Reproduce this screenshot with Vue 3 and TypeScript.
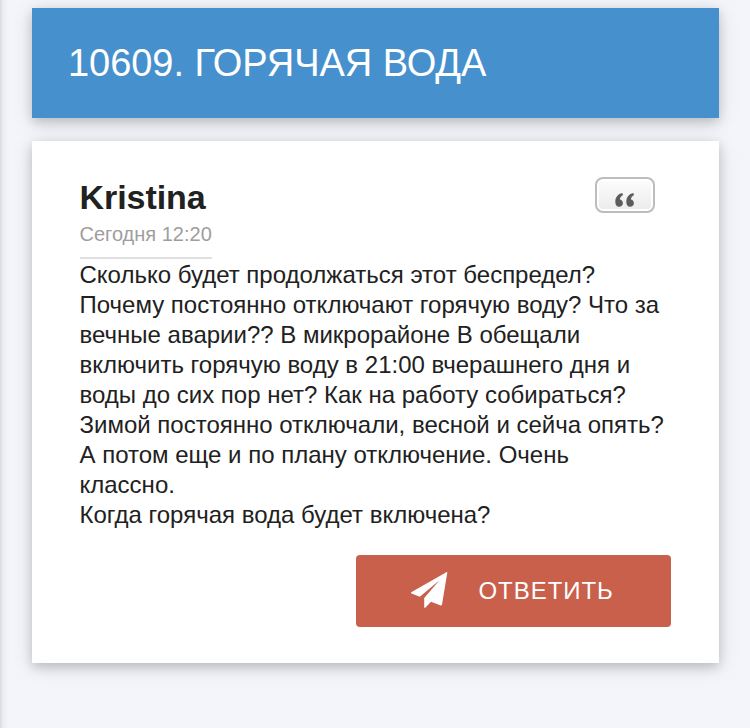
<script setup lang="ts">
const title: string = '10609. ГОРЯЧАЯ ВОДА'
const lines: string[] = [
  'Сколько будет продолжаться этот беспредел?',
  'Почему постоянно отключают горячую воду? Что за',
  'вечные аварии?? В микрорайоне В обещали',
  'включить горячую воду в 21:00 вчерашнего дня и',
  'воды до сих пор нет? Как на работу собираться?',
  'Зимой постоянно отключали, весной и сейча опять?',
  'А потом еще и по плану отключение. Очень',
  'классно.',
  'Когда горячая вода будет включена?',
]
</script>

<template>
  <main class="page">
    <div class="topic">
      <header class="title-card"><h1>{{ title }}</h1></header>
      <article class="post">
        <div class="post-head">
          <div class="meta">
            <h2>Kristina</h2>
            <time>Сегодня 12:20</time>
          </div>
          <button class="quote" aria-label="Цитировать">
            <svg width="22" height="16" viewBox="0 0 22 16">
              <path d="M8.300 1C4 2 1.300 5 1.300 9.800C1.300 13 2.800 14.800 5 14.800C7.200 14.800 8.900 13.300 8.900 11.300C8.900 9.300 7.600 7.700 5.900 7.600C6 5.500 7 4 9 2.900Z" />
              <path d="M19.300 1C15 2 12.300 5 12.300 9.800C12.300 13 13.800 14.800 16 14.800C18.200 14.800 19.900 13.300 19.900 11.300C19.900 9.300 18.600 7.700 16.900 7.600C17 5.500 18 4 20 2.900Z" />
            </svg>
          </button>
        </div>
        <p class="body"><span v-for="line in lines" :key="line">{{ line }}</span></p>
        <div class="actions">
          <button class="reply">
            <svg width="38" height="38" viewBox="0 0 38 38">
              <path d="M36.800 1L1.200 21.200Q.6 22 1.500 22.500L9.800 25.800L29.500 9.200L14.200 27V36.300Q14.700 37.300 15.500 36.600L21 30.700L30.800 34.500Q31.800 34.600 32 33.600L37.300 1.500Q37.300 .8 36.800 1Z" />
            </svg>
            <span>ОТВЕТИТЬ</span>
          </button>
        </div>
      </article>
    </div>
  </main>
</template>

<style>
body {
  margin: 0;
  background: #f4f5fa;
}
</style>

<style scoped>
.page {
  box-sizing: border-box;
  height: 728px;
  padding: 8px 31px 0 32px;
  overflow: hidden;
  background: linear-gradient(to right, #d9dade 0, #ececf1 3px, #f4f5fa 9px);
  font-family: "Liberation Sans", Arial, sans-serif;
  color: #212121;
}
.topic {
  display: flex;
  flex-direction: column;
  gap: 23px;
}
.title-card,
.post {
  box-sizing: border-box;
  box-shadow: 0 4px 10px rgba(0, 0, 0, 0.16), 0 4px 20px rgba(0, 0, 0, 0.12);
}
.title-card {
  height: 110px;
  padding: 0 36px;
  display: flex;
  align-items: center;
  background: #4690ce;
}
h1 {
  margin: 0;
  font-size: 38px;
  font-weight: 400;
  line-height: 44px;
  letter-spacing: -0.05px;
  color: #fff;
  white-space: nowrap;
}
.post {
  height: 522px;
  padding: 36px 48px 36px 47.5px;
  background: #fff;
}
.post-head {
  display: flex;
  justify-content: space-between;
  align-items: flex-start;
  padding-right: 16px;
}
.meta {
  display: flex;
  flex-direction: column;
  align-items: flex-start;
}
h2 {
  margin: 0;
  font-size: 34px;
  line-height: 40px;
  letter-spacing: -0.05px;
}
time {
  height: 38px;
  margin-top: 2px;
  border-bottom: 2px solid #e0e0e0;
  font-size: 20px;
  line-height: 30px;
  color: #9e9e9e;
}
button {
  margin: 0;
  border: 0;
  font: inherit;
}
.quote {
  box-sizing: border-box;
  width: 60px;
  height: 36px;
  padding: 10px 1px 0 0;
  display: flex;
  justify-content: center;
  align-items: center;
  border: 2px solid #bdbdbd;
  border-radius: 8px;
  background: linear-gradient(#fdfdfd, #ebebeb);
  box-shadow: inset 0 0 0 2px #fff;
  fill: #5c5c5c;
}
.body {
  margin: 1px 0 0;
  font-size: 24px;
  line-height: 30px;
}
.body span {
  display: block;
  white-space: nowrap;
}
.actions {
  display: flex;
  justify-content: flex-end;
  margin-top: 25px;
}
.reply {
  width: 315px;
  height: 72px;
  padding: 0 0 0 54px;
  display: flex;
  align-items: center;
  gap: 30.5px;
  border-radius: 4px;
  background: #c9604c;
  color: #fff;
  fill: #fff;
  font-size: 24px;
  letter-spacing: 0.95px;
}
.reply svg {
  margin-bottom: 2px;
}
</style>
